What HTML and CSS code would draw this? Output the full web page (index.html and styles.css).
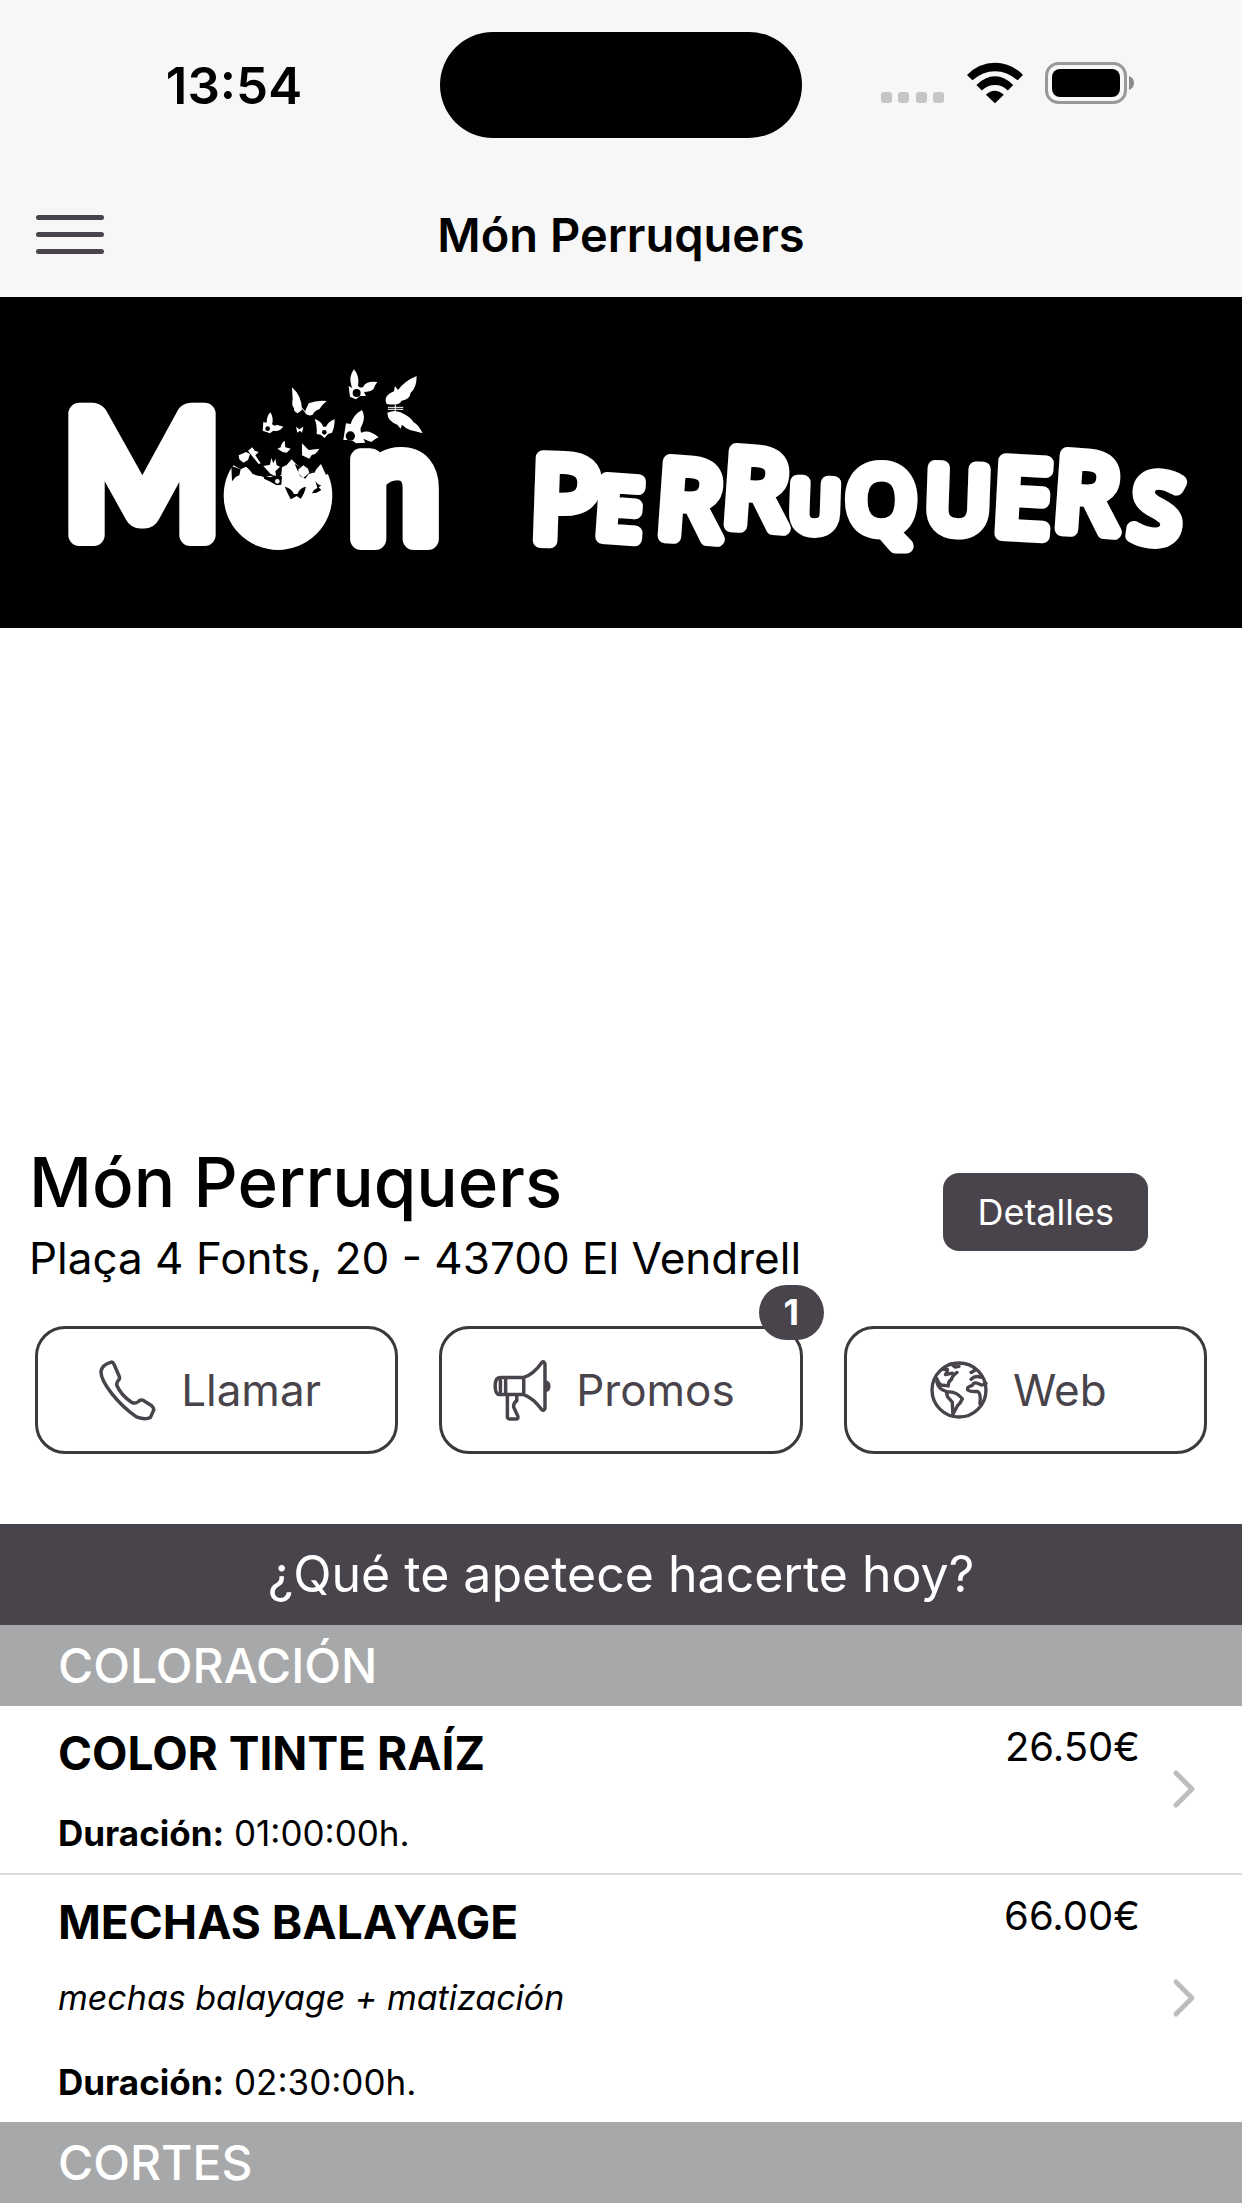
FILE: index.html
```html
<!DOCTYPE html>
<html lang="es">
<head>
    <meta charset="UTF-8">
    <meta name="viewport" content="width=device-width, initial-scale=1">
    <title>Món Perruquers</title>
    <link rel="stylesheet" href="styles.css">
</head>
<body>
    <!-- status bar -->
    <div class="status">
        <div class="status-side status-left">13:54</div>
        <div class="island"></div>
        <div class="status-side status-right">
            <svg class="dots" viewBox="0 0 64 42">
                <rect x="0" y="30" width="11" height="11" rx="3"/>
                <rect x="17" y="30" width="11" height="11" rx="3"/>
                <rect x="35" y="30" width="11" height="11" rx="3"/>
                <rect x="52" y="30" width="11" height="11" rx="3"/>
            </svg>
            <svg class="wifi" viewBox="0 0 166 124">
                <path d="M0 38Q36 2 83 2T166 38L150 54Q119 27 83 27T16 54Z"/>
                <path d="M28 68Q54 42 83 42T137 68L121 84Q104 68 83 68T44 84Z"/>
                <path d="M56 97Q82 73 109 97L83 122Z"/>
            </svg>
            <svg class="battery" viewBox="0 0 90 42">
                <rect x="1.5" y="1.5" width="79" height="39" rx="12" fill="none" stroke="#999" stroke-width="3"/>
                <rect x="7" y="7" width="68" height="28" rx="8"/>
                <path d="M84 14Q89 16 89 21T84 28Z" fill="#8a8a8a"/>
            </svg>
        </div>
    </div>

    <!-- nav bar -->
    <header class="nav">
        <button class="menu" aria-label="Menú"><span></span><span></span><span></span></button>
        <h1>Món Perruquers</h1>
    </header>

    <!-- logo -->
    <div class="banner">
        <svg viewBox="0 0 1242 331" role="img" aria-label="Món Perruquers">
            <g class="logo-mon">
                <text x="64" y="238" font-size="168">M</text>
                <text x="350" y="242" font-size="158">n</text>
            </g>
            <g transform="translate(220 63) scale(.3333)" fill="#fff">
                <circle cx="174" cy="407" r="163"/>
                <path fill="#000" d="M20 230H340V330L318 345L303 312L290 326L282 340L262 322L246 326L228 312L215 298L200 315L186 322L184 345L150 348L128 350L104 342L78 320L62 328L40 316L20 340Z"/>
                <path fill="#000" d="M34 318L62 328L58 346L48 350L36 364Z"/>
                <path fill="#000" d="M80 318Q98 300 116 314L128 340L134 346L116 348L98 342Z"/>
                <path fill="#000" d="M130 346L150 352L176 342L186 350L184 374L170 376L148 364L132 356Z"/>
                <path d="M56 286L78 276L90 282L84 300L70 308L58 298ZM84 272L97 262L104 272L116 276L106 286L122 310L116 312L98 290Z"/>
                <path d="M130 318L150 314L154 294L160 310L166 296L170 316L180 320L166 334L168 348L152 342Z"/>
                <circle cx="172" cy="364" r="7"/>
                <path fill="#000" d="M224 312Q250 328 262 320L280 338L266 342L256 356L240 348Z"/>
                <path d="M236 328L250 316L264 326L268 338L250 354L234 340Z"/>
                <path fill="#000" d="M194 380Q214 384 222 402L232 402Q240 382 258 380Q252 404 242 416L230 408L220 414L212 418L204 402Z"/>
                <path fill="#000" d="M286 362Q292 374 304 376L296 382L304 390L290 398L276 400L282 390L292 384Z"/>
                <path d="M216 82Q246 108 246 150L233 160Q220 154 222 144Q214 138 218 118ZM256 152L266 130Q290 120 320 123Q304 136 298 148Q284 152 278 164Q266 170 256 160Z"/>
                <path d="M402 28Q420 50 414 78Q422 86 430 80Q438 62 472 66Q464 76 460 88Q450 96 432 96L438 108L420 108L408 118L390 110L386 78L396 84Q384 50 402 28Z"/>
                <circle cx="410" cy="99" r="12" fill="#000"/>
                <path d="M590 48Q590 84 572 98Q570 118 545 122Q538 138 500 132Q488 108 522 94L525 78L534 90Q555 62 590 48ZM502 158Q530 146 556 164Q574 174 580 186Q596 194 608 220Q588 214 570 210Q558 206 546 194L542 206L532 194Q502 182 502 158Z"/>
                <path d="M504 142H550M504 148H550M526 134V154M244 142L262 164" stroke="#fff" stroke-width="3" fill="none"/>
                <path d="M426 150Q438 170 426 196Q418 208 424 218Q446 206 476 232Q462 238 454 246Q438 240 430 236L436 248L408 250L398 242L382 240L370 240L378 190L392 192Q400 164 426 150Z"/>
                <circle cx="391" cy="228" r="14" fill="#000"/>
                <path d="M152 157Q162 180 156 192Q164 200 170 194L190 200Q178 216 160 212L150 220L128 212L130 186L140 188Q140 166 152 157ZM284 177Q304 184 310 200L318 200Q326 184 344 178Q344 202 336 218L324 222L314 234L302 224L290 222Q292 198 284 177Z"/>
                <circle cx="143" cy="206" r="7" fill="#000"/><circle cx="313" cy="217" r="7" fill="#000"/>
                <path d="M228 200L238 208L250 200L246 218L240 212L232 218ZM194 242L196 262L212 266L200 278L188 276L172 266L182 262Q184 248 194 242ZM246 250L266 270L298 266Q288 284 276 284L268 296L246 286Z"/>
            </g>
            <g class="logo-perruquers">
                <text x="529" y="243" font-size="116" rotate="2">P</text>
                <text x="595" y="239" font-size="80" rotate="4">E</text>
                <text x="655" y="238" font-size="104" rotate="4">R</text>
                <text x="721" y="227" font-size="104" rotate="4">R</text>
                <text x="790" y="232" font-size="66" rotate="2">U</text>
                <text x="847" y="234" font-size="88">Q</text>
                <text x="925" y="233" font-size="88" rotate="2">U</text>
                <text x="992" y="236" font-size="102" rotate="3">E</text>
                <text x="1052" y="231" font-size="104" rotate="4">R</text>
                <text x="1128" y="240" font-size="90" rotate="8">S</text>
            </g>
        </svg>
    </div>

    <!-- salon info -->
    <section class="info">
        <div class="info-top">
            <div>
                <h2>Món Perruquers</h2>
                <p class="address">Plaça 4 Fonts, 20 - 43700 El Vendrell</p>
            </div>
            <button class="details">Detalles</button>
        </div>
        <div class="actions">
            <button class="action">
                <svg viewBox="0 0 166 178">
                    <path d="M38 9Q12 16 8 36Q8 60 40 100Q72 140 110 166Q136 176 150 168L160 146Q160 140 154 134L128 118Q120 116 116 122Q106 130 96 124Q66 104 54 76Q52 68 58 62Q64 56 60 48L46 16Q42 8 38 9Z"/>
                </svg>
                Llamar
            </button>
            <button class="action">
                <svg viewBox="0 0 166 178">
                    <path d="M88 53Q116 44 140 10Q146 4 149 14V142Q146 150 140 146Q116 112 88 102ZM88 53H20Q6 53 6 78T20 102H88M36 53V102M21 62V94M41 104V166Q41 172 48 172H66Q73 172 71 164L59 138Q58 126 68 120V104M151 66Q160 68 160 78T151 90Z"/>
                </svg>
                Promos
                <span class="badge">1</span>
            </button>
            <button class="action">
                <svg viewBox="0 0 172 172">
                    <circle cx="86" cy="86" r="80"/>
                    <path d="M20 52Q28 74 40 72L54 74M20 60Q24 84 48 90L52 106L66 122L68 160M52 92Q76 88 96 112Q90 126 82 132L68 158M54 74Q54 60 64 54Q66 44 80 34M36 24L52 26Q50 36 46 40L66 36M62 8L74 18L86 16M166 66Q154 76 142 66Q128 62 126 72Q108 76 112 86Q120 92 140 90Q152 94 148 126M122 54Q134 42 150 48M122 34L132 28"/>
                </svg>
                Web
            </button>
        </div>
    </section>

    <!-- services -->
    <main>
        <h2 class="question">¿Qué te apetece hacerte hoy?</h2>
        <h3 class="category">COLORACIÓN</h3>
        <a href="#" class="service">
            <div class="service-text">
                <h4>COLOR TINTE RAÍZ</h4>
                <p class="duration"><b>Duración:</b> 01:00:00h.</p>
            </div>
            <span class="price">26.50€</span>
            <svg class="chevron" viewBox="0 0 24 40"><path d="M4 4L20 20L4 36"/></svg>
        </a>
        <a href="#" class="service">
            <div class="service-text">
                <h4>MECHAS BALAYAGE</h4>
                <p class="desc">mechas balayage + matización</p>
                <p class="duration"><b>Duración:</b> 02:30:00h.</p>
            </div>
            <span class="price">66.00€</span>
            <svg class="chevron" viewBox="0 0 24 40"><path d="M4 4L20 20L4 36"/></svg>
        </a>
        <h3 class="category">CORTES</h3>
    </main>
</body>
</html>
```
FILE: styles.css
```css
*{
    margin: 0;
    padding: 0;
    box-sizing: border-box;
}
body{
    font-family: Inter, "Liberation Sans", sans-serif;
    background: #fff;
    color: #000;
}
button{
    font-family: inherit;
    cursor: pointer;
}
/* status bar */
.status{
    display: flex;
    align-items: center;
    height: 170px;
    background: #f7f7f7;
}
.status-side{
    flex: 1;
    display: flex;
    justify-content: center;
    align-items: center;
    gap: 22px;
    font-size: 51px;
    font-weight: 600;
}
.status-left{
    padding-left: 28px;
}
.status-right{
    padding-right: 28px;
    padding-bottom: 4px;
}
.island{
    width: 362px;
    height: 106px;
    border-radius: 53px;
    background: #000;
}
.dots{
    width: 64px;
    height: 42px;
    fill: #c6c6c6;
}
.wifi{
    width: 56px;
    height: 42px;
}
.battery{
    width: 90px;
    height: 42px;
}
/* nav bar */
.nav{
    display: grid;
    grid-template-columns: 68px 1fr 68px;
    align-items: center;
    height: 127px;
    padding: 2px 36px 0;
    background: #f7f7f7;
}
.nav h1{
    font-size: 47px;
    line-height: 60px;
    font-weight: 600;
    text-align: center;
}
.menu{
    display: flex;
    flex-direction: column;
    gap: 12px;
    border: 0;
    background: none;
}
.menu span{
    height: 5px;
    border-radius: 3px;
    background: #49444b;
}
/* logo */
.banner{
    background: #000;
}
.banner svg{
    display: block;
    width: 100%;
}
.banner text{
    fill: #fff;
    stroke: #fff;
    stroke-linejoin: round;
}
.logo-mon{
    font-family: Lato, sans-serif;
    font-weight: 400;
    stroke-width: 22px;
}
.logo-perruquers{
    font-family: "Open Sans", sans-serif;
    font-weight: 400;
    stroke-width: 15px;
}
/* salon info */
.info{
    padding: 512px 35px 70px;
}
.info-top{
    display: flex;
    justify-content: space-between;
    align-items: center;
    padding-right: 59px;
    margin-left: -6px;
}
.info h2{
    font-size: 69px;
    line-height: 84px;
    font-weight: 500;
}
.address{
    font-size: 44px;
    line-height: 68px;
}
.details{
    margin-bottom: 8px;
    padding: 0 34px;
    border: 0;
    border-radius: 16px;
    background: #49444b;
    color: #fff;
    font-size: 36px;
    line-height: 78px;
}
.actions{
    display: flex;
    gap: 41px;
    margin-top: 34px;
}
.action{
    position: relative;
    flex: 1;
    display: flex;
    justify-content: center;
    align-items: center;
    gap: 25px;
    height: 128px;
    padding-right: 14px;
    border: 3px solid #3c383e;
    border-radius: 30px;
    background: #fff;
    color: #49444b;
    font-size: 44px;
}
.action svg{
    width: 58px;
    height: 62px;
    fill: none;
    stroke: #49444b;
    stroke-width: 10;
    stroke-linejoin: round;
    stroke-linecap: round;
}
.badge{
    position: absolute;
    top: -44px;
    right: -24px;
    width: 65px;
    border-radius: 28px;
    background: #49444b;
    color: #fff;
    font-size: 36px;
    line-height: 55px;
    font-weight: 700;
}
/* services */
.question{
    background: #49444b;
    color: #fff;
    font-size: 50px;
    line-height: 101px;
    font-weight: 400;
    text-align: center;
}
.category{
    padding-left: 58px;
    background: #a7a8aa;
    color: #fff;
    font-size: 48px;
    line-height: 81px;
    font-weight: 500;
}
.service{
    display: flex;
    padding: 17px 46px 18px 58px;
    color: #000;
    text-decoration: none;
}
.service + .service{
    border-top: 2px solid #dcdcdc;
}
.service-text{
    flex: 1;
}
.service h4{
    font-size: 46px;
    line-height: 60px;
    font-weight: 700;
}
.desc{
    margin-top: 22px;
    font-size: 34px;
    line-height: 48px;
    font-style: italic;
}
.duration{
    margin-top: 28px;
    font-size: 35px;
    line-height: 44px;
}
.desc + .duration{
    margin-top: 38px;
}
.price{
    font-size: 40px;
    line-height: 48px;
}
.chevron{
    align-self: center;
    width: 24px;
    height: 40px;
    margin-left: 32px;
    fill: none;
    stroke: #bdbdbd;
    stroke-width: 5;
    stroke-linecap: round;
    stroke-linejoin: round;
}
```
